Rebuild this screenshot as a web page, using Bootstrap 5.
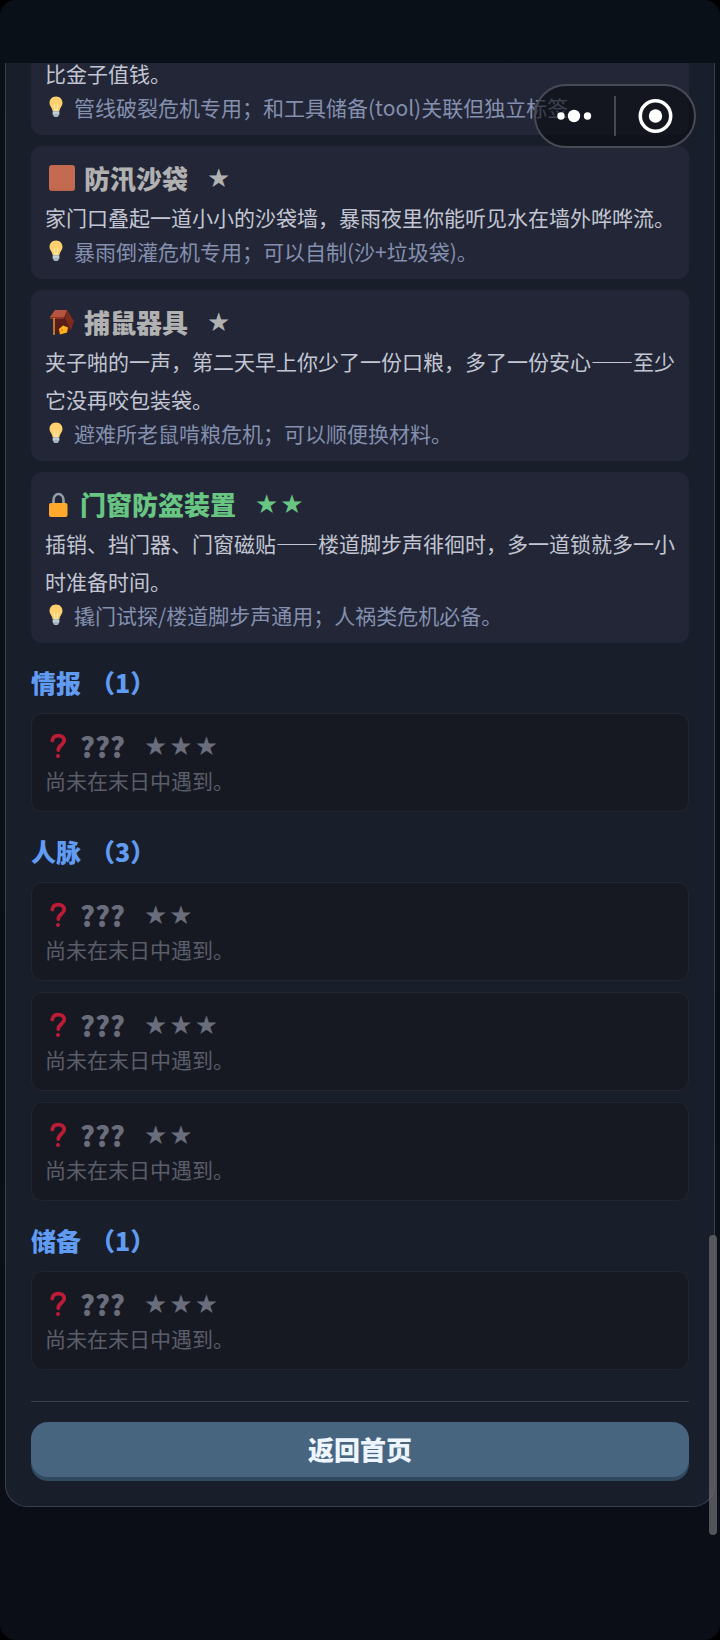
<!DOCTYPE html>
<html lang="zh-CN">
<head>
<meta charset="utf-8">
<meta name="viewport" content="width=device-width, initial-scale=1">
<title>图鉴</title>
<link href="https://cdn.jsdelivr.net/npm/bootstrap@5.3.0/dist/css/bootstrap.min.css" rel="stylesheet">
<style>
  body { background: #000; font-family: "Noto Sans CJK SC", sans-serif; font-size: 21px; color: #c3c6d2; }
  .screen { background: linear-gradient(#091018, #0b0e17); border-radius: 16px; }
  .top-bar { height: 63px; }
  .scroll-area { padding: 0 5px; }
  .panel { background: #191e2b; border: 1px solid #3a404d; border-top: 0; border-radius: 0 0 22px 22px; padding: 0 25px 25px; }
  .entries { gap: 11px; }
  .entry { background: #222637; border-radius: 11px; padding: 14px 13px 14px 14px; }
  .entry-cut { border-radius: 0 0 11px 11px; padding-top: 0; }
  .entry-cut .desc { line-height: 20px; margin: 0 0 10px; }
  .title { font-size: 26px; line-height: 36px; font-weight: 900; color: #b1b1b1; padding-left: 4px; }
  .title svg { margin-right: 9px; }
  .title .rare { color: #68c582; }
  .stars { margin-left: 19px; gap: 2px; font-family: "DejaVu Sans", sans-serif; font-size: 26px; font-weight: 400; }
  .desc { line-height: 38px; margin-top: 2px; }
  .hint { line-height: 28px; margin-top: 1px; color: #8490ae; padding-left: 4px; gap: 11px; }
  .entry-cut .hint { margin-top: 0; }
  .locked { background: #161922; border: 1px solid #232630; padding: 14px 13px; }
  .locked .title { color: #696d7c; }
  .locked .unknown { font-size: 28px; }
  .locked .desc { color: #5b5e6a; line-height: 32px; margin: 0 0 1px; }
  .group-name { font-size: 25px; line-height: 36px; font-weight: 900; color: #619cf4; margin: 21px 0 13px; gap: 9px; }
  .entries:first-child + .group-name { margin-top: 21px; }
  .rule { border-top: 1px solid #3a404d; margin: 31px 0 20px; }
  .btn-home, .btn-home:hover { background: #486580; color: #edf6ff; font-size: 26px; line-height: 39px; font-weight: 900; border: 0; border-radius: 17px; padding: 7px 8px 9px; box-shadow: 0 4px 0 #324a5f; margin-bottom: 4px; }
  .bottom-space { height: 133px; }
  .capsule { top: 84px; right: 24px; width: 162px; height: 64px; border: 2px solid #484b55; border-radius: 32px; background: rgba(8, 10, 14, .58); z-index: 3; }
  .capsule button { border: 0; background: none; padding: 0; }
  .capsule .vline { width: 2px; height: 40px; background: #464852; }
  .thumb { right: 3px; top: 1235px; width: 8px; height: 300px; border-radius: 4px; background: rgba(104, 104, 108, .78); z-index: 2; }
</style>
</head>
<body>
<svg class="d-none" aria-hidden="true">
  <symbol id="bulb" viewBox="0 0 14 22">
    <path d="M7 .5C3 .5.5 3.400.5 7c0 3 2.500 4.600 3.200 8h6.600c.7-3.400 3.200-5 3.200-8C13.500 3.400 11 .5 7 .5z" fill="#ffd16e"/>
    <path d="M5 8.500 6.200 15h1.600L9 8.500" fill="none" stroke="#fff0bd" stroke-width="1"/>
    <path d="M3.700 15h6.600v3.500L8.800 21H5.200l-1.500-2.500z" fill="#a6b5bd"/>
    <path d="M3.700 17h6.600" stroke="#dce6ea" stroke-width="1"/>
  </symbol>
  <symbol id="quest" viewBox="0 0 22 26">
    <path d="M3.300 7.500C4 4 6.200 2.700 9.200 2.700c3.700 0 6 2 6 4.900 0 4.400-5.900 4.400-5.900 9.400" fill="none" stroke="#bd1c36" stroke-width="3.800" stroke-linecap="round"/>
    <circle cx="9" cy="23" r="2" fill="#bd1c36"/>
  </symbol>
</svg>

<div class="screen position-relative">
  <header class="top-bar"></header>
  <div class="capsule position-absolute d-flex align-items-center">
    <button type="button" class="flex-fill" aria-label="更多">
      <svg width="36" height="14" viewBox="0 0 36 14" fill="#fff" class="d-block mx-auto"><circle cx="4" cy="7" r="3.700"/><circle cx="17" cy="7" r="6.200"/><circle cx="30.500" cy="7" r="3.700"/></svg>
    </button>
    <span class="vline"></span>
    <button type="button" class="flex-fill" aria-label="关闭">
      <svg width="36" height="36" viewBox="0 0 36 36" class="d-block mx-auto"><circle cx="18.500" cy="18" r="15.200" fill="none" stroke="#fff" stroke-width="3.500"/><circle cx="18.500" cy="18" r="6.700" fill="#fff"/></svg>
    </button>
  </div>

  <main class="scroll-area">
    <div class="panel">
      <div class="entries d-flex flex-column">
        <article class="entry entry-cut">
          <div class="desc">比金子值钱。</div>
          <div class="hint d-flex align-items-center"><svg width="14" height="22"><use href="#bulb"/></svg><span class="text-nowrap">管线破裂危机专用；和工具储备(tool)关联但独立标签。</span></div>
        </article>
        <article class="entry">
          <div class="title d-flex align-items-center">
            <svg width="26" height="26" viewBox="0 0 26 26"><rect width="26" height="26" rx="3" fill="#c46a51"/><path d="M1 25h24" stroke="#b15f49"/></svg>
            <span>防汛沙袋</span><span class="stars d-flex"><span>★</span></span>
          </div>
          <div class="desc">家门口叠起一道小小的沙袋墙，暴雨夜里你能听见水在墙外哗哗流。</div>
          <div class="hint d-flex align-items-center"><svg width="14" height="22"><use href="#bulb"/></svg><span>暴雨倒灌危机专用；可以自制(沙+垃圾袋)。</span></div>
        </article>
        <article class="entry">
          <div class="title d-flex align-items-center">
            <svg width="26" height="26" viewBox="0 0 26 26">
              <path d="M18 1 25 12l-3 9-7 4H9l-4-4V10z" fill="#571d16"/>
              <path d="M18 1 25 12l-3 9-6-12z" fill="#7c2b1d"/>
              <path d="M6 1h12l-3 8-14-1z" fill="#b6553f"/>
              <path d="M1 8h14l-1 2H1z" fill="#8d3527"/>
              <path d="M0 10h4v16H0zM6 22l5 4H6z" fill="#222637"/>
              <path d="M5 9v17" stroke="#e58b2c" stroke-width="1.600"/>
              <path d="m10 20 4-3.500 5 2-1 5-7 2z" fill="#ffb21e"/><circle cx="13" cy="21" r="1" fill="#d98310"/>
            </svg>
            <span>捕鼠器具</span><span class="stars d-flex"><span>★</span></span>
          </div>
          <div class="desc">夹子啪的一声，第二天早上你少了一份口粮，多了一份安心——至少它没再咬包装袋。</div>
          <div class="hint d-flex align-items-center"><svg width="14" height="22"><use href="#bulb"/></svg><span>避难所老鼠啃粮危机；可以顺便换材料。</span></div>
        </article>
        <article class="entry">
          <div class="title d-flex align-items-center">
            <svg width="22" height="26" viewBox="0 0 22 26"><path d="M4.500 14V9a5 6 0 0 1 10 0v5" fill="none" stroke="#929da8" stroke-width="2.600"/><rect y="12" width="18.500" height="14" rx="2" fill="#ffa82e"/></svg>
            <span class="rare">门窗防盗装置</span><span class="stars rare d-flex"><span>★</span><span>★</span></span>
          </div>
          <div class="desc">插销、挡门器、门窗磁贴——楼道脚步声徘徊时，多一道锁就多一小时准备时间。</div>
          <div class="hint d-flex align-items-center"><svg width="14" height="22"><use href="#bulb"/></svg><span>撬门试探/楼道脚步声通用；人祸类危机必备。</span></div>
        </article>
      </div>

      <h2 class="group-name d-flex"><span>情报</span><span>（1）</span></h2>
      <div class="entries d-flex flex-column">
        <article class="entry locked">
          <div class="title d-flex align-items-center"><svg width="22" height="26"><use href="#quest"/></svg><span class="unknown">???</span><span class="stars d-flex"><span>★</span><span>★</span><span>★</span></span></div>
          <div class="desc">尚未在末日中遇到。</div>
        </article>
      </div>

      <h2 class="group-name d-flex"><span>人脉</span><span>（3）</span></h2>
      <div class="entries d-flex flex-column">
        <article class="entry locked">
          <div class="title d-flex align-items-center"><svg width="22" height="26"><use href="#quest"/></svg><span class="unknown">???</span><span class="stars d-flex"><span>★</span><span>★</span></span></div>
          <div class="desc">尚未在末日中遇到。</div>
        </article>
        <article class="entry locked">
          <div class="title d-flex align-items-center"><svg width="22" height="26"><use href="#quest"/></svg><span class="unknown">???</span><span class="stars d-flex"><span>★</span><span>★</span><span>★</span></span></div>
          <div class="desc">尚未在末日中遇到。</div>
        </article>
        <article class="entry locked">
          <div class="title d-flex align-items-center"><svg width="22" height="26"><use href="#quest"/></svg><span class="unknown">???</span><span class="stars d-flex"><span>★</span><span>★</span></span></div>
          <div class="desc">尚未在末日中遇到。</div>
        </article>
      </div>

      <h2 class="group-name d-flex"><span>储备</span><span>（1）</span></h2>
      <div class="entries d-flex flex-column">
        <article class="entry locked">
          <div class="title d-flex align-items-center"><svg width="22" height="26"><use href="#quest"/></svg><span class="unknown">???</span><span class="stars d-flex"><span>★</span><span>★</span><span>★</span></span></div>
          <div class="desc">尚未在末日中遇到。</div>
        </article>
      </div>

      <div class="rule"></div>
      <button type="button" class="btn btn-home d-block w-100">返回首页</button>
    </div>
  </main>
  <div class="bottom-space"></div>
  <div class="thumb position-absolute"></div>
</div>
<script src="https://cdn.jsdelivr.net/npm/bootstrap@5.3.0/dist/js/bootstrap.bundle.min.js"></script>
</body>
</html>
